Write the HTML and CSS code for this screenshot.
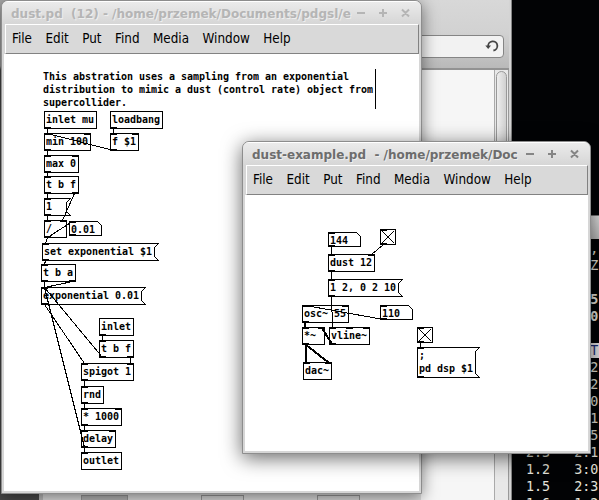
FILE: index.html
```html
<!DOCTYPE html>
<html lang="en">
<head>
<meta charset="utf-8">
<title>Pure Data patches</title>
<link rel="stylesheet" href="styles.css">
</head>
<body>
<div class="desktop">
  <div class="terminal">
    <pre class="term-text">        ,
        Z

<b>        5</b>
<b>        0</b>

<span class="term-head">        T </span>
        2
        2
        0
        1
        5
2.3   2:1
1.2   3:0
1.5   2:3
1.6   1:2</pre>
    <div class="term-bar"></div>
  </div>
  <div class="browser">
    <div class="toolbar">
      <div class="field">
        <svg width="14" height="14" viewBox="0 0 14 14"><path d="M3.2 7.5 A4.6 4.6 0 1 1 8.4 11.5" fill="none" stroke="#444" stroke-width="1.8"/><path d="M.3 6.6H6L3.2 10z" fill="#444"/></svg>
      </div>
    </div>
    <div class="content"><div class="thumbs"><i></i><i></i><i></i></div><div class="scrollbar"><div class="thumb"></div></div></div>
  </div>

  <section class="window main">
    <header class="titlebar"><span class="title">dust.pd&nbsp; (12) - /home/przemek/Documents/pdgsl/e</span>
      <svg class="controls" width="56" height="12" viewBox="0 0 56 12"><path d="M1 6h8M23 6h8M27 2v8M46 2.5l7 7M53 2.5l-7 7"/></svg>
    </header>
    <nav class="menu"><span>File</span><span>Edit</span><span>Put</span><span>Find</span><span>Media</span><span>Window</span><span>Help</span></nav>
    <svg class="patch" width="415" height="437" viewBox="4 54 415 437">
      <g class="text">
        <text x="43" y="80" textLength="306">This abstration uses a sampling from an exponential</text>
        <text x="43" y="93" textLength="330">distribution to mimic a dust (control rate) object from</text>
        <text x="43" y="106" textLength="84">supercollider.</text>
      </g>
      <path class="box" d="M375.5 69v40"/>
      <g class="box">
        <path d="M44.5 111.5h52v17h-52zM110.5 111.5h52v17h-52zM44.5 133.5h46v17h-46zM110.5 133.5h28v17h-28zM44.5 155.5h34v17h-34zM44.5 176.5h34v17h-34z"/>
        <path d="M44.5 198.5h26l-4 4v9l4 4h-26zM44.5 220.5h22v17h-22zM69.5 221.5h28l4 4v10h-32z"/>
        <path d="M42.5 243.5h116l-4 4v9l4 4h-116zM41.5 264.5h34v17h-34zM41.5 287.5h104l-4 4v9l4 4h-104z"/>
        <path d="M99.5 318.5h34v17h-34zM99.5 340.5h34v17h-34zM81.5 363.5h52v17h-52zM81.5 386.5h22v17h-22zM81.5 408.5h40v17h-40zM81.5 430.5h34v17h-34zM81.5 452.5h40v17h-40z"/>
      </g>
      <path class="port" d="M44 128h7M110 128h7M44 134h7M84 134h7M44 150h7M110 134h7M132 134h7M110 150h7M44 156h7M72 156h7M44 172h7M44 177h7M44 193h7M72 193h7M44 199h7M44 215h7M44 221h7M60 221h7M44 237h7M69 222h7M69 235h7M42 244h7M42 260h7M41 265h7M41 281h7M69 281h7M41 288h7M41 304h7M99 335h7M99 341h7M99 357h7M127 357h7M81 364h7M127 364h7M81 380h7M81 387h7M81 403h7M81 409h7M115 409h7M81 425h7M81 431h7M109 431h7M81 447h7M81 453h7"/>
      <path class="wire" d="M47.5 128v6M113.5 128v6M47.5 150v6M113.5 150.5L47.5 133.5M47.5 172v5M47.5 193v6M74.5 193.5L62.5 220.5M47.5 215v6M47.5 237.5L45.5 243.5M47.5 237.5L72.5 221.5M45.5 260.5L44.5 264.5M44.5 281v7M72.5 281.5L44.5 287.5M44.5 304.5L84.5 363.5M102.5 357.5L44.5 287.5M84.5 447.5L44.5 287.5M102.5 335v6M130.5 357v7M84.5 380v7M84.5 403v6M84.5 425v6M84.5 447v6"/>
      <g class="text">
        <text x="46" y="123" textLength="48">inlet mu</text>
        <text x="112" y="123" textLength="48">loadbang</text>
        <text x="46" y="145" textLength="42">min 100</text>
        <text x="112" y="145" textLength="24">f $1</text>
        <text x="46" y="167" textLength="30">max 0</text>
        <text x="46" y="188" textLength="30">t b f</text>
        <text x="46" y="210">1</text>
        <text x="46" y="232">/</text>
        <text x="71" y="233" textLength="24">0.01</text>
        <text x="44" y="255" textLength="108">set exponential $1</text>
        <text x="43" y="276" textLength="30">t b a</text>
        <text x="43" y="299" textLength="96">exponential 0.01</text>
        <text x="101" y="330" textLength="30">inlet</text>
        <text x="101" y="352" textLength="30">t b f</text>
        <text x="83" y="375" textLength="48">spigot 1</text>
        <text x="83" y="398" textLength="18">rnd</text>
        <text x="83" y="420" textLength="36">* 1000</text>
        <text x="83" y="442" textLength="30">delay</text>
        <text x="83" y="464" textLength="36">outlet</text>
      </g>
    </svg>
  </section>

  <section class="window example">
    <header class="titlebar"><span class="title">dust-example.pd&nbsp; - /home/przemek/Doc</span>
      <svg class="controls" width="56" height="12" viewBox="0 0 56 12"><path d="M1 6h8M23 6h8M27 2v8M46 2.5l7 7M53 2.5l-7 7"/></svg>
    </header>
    <nav class="menu"><span>File</span><span>Edit</span><span>Put</span><span>Find</span><span>Media</span><span>Window</span><span>Help</span></nav>
    <svg class="patch" width="343" height="256" viewBox="245 195 343 256">
      <g class="box">
        <path d="M328.5 232.5h28l4 4v10h-32zM380.5 229.5h15v15h-15zM328.5 254.5h46v17h-46zM328.5 279.5h74l-4 4v9l4 4h-74z"/>
        <path d="M302.5 305.5h46v17h-46zM380.5 305.5h28l4 4v10h-32zM302.5 327.5h22v17h-22zM329.5 327.5h40v17h-40zM303.5 362.5h28v17h-28z"/>
        <path d="M417.5 327.5h15v15h-15zM417.5 347.5h62l-4 4v22l4 4h-62z"/>
      </g>
      <path class="port" d="M328 233h7M328 246h7M380 230h7M380 244h7M328 255h7M368 255h7M328 271h7M328 280h7M328 296h7M302 306h7M342 306h7M302 322h7M380 306h7M380 319h7M302 328h7M318 328h7M302 344h7M329 328h7M346 328h7M363 328h7M329 344h7M303 363h7M325 363h7M417 328h7M417 342h7M417 348h7M417 377h7"/>
      <path class="wire" d="M382 231l12 12M394 231l-12 12M419 329l12 12M431 329l-12 12M331.5 246v9M383.5 244.5L371.5 254.5M331.5 271v9M331.5 296.5L332.5 327.5M383.5 319.5L305.5 305.5M420.5 342v6"/>
      <path class="wire signal" d="M305 322v6M332.5 344.5L321.5 327.5M306 344v19M305.5 344.5L328.5 362.5"/>
      <g class="text">
        <text x="330" y="244" textLength="18">144</text>
        <text x="330" y="266" textLength="42">dust 12</text>
        <text x="330" y="291" textLength="66">1 2, 0 2 10</text>
        <text x="304" y="317" textLength="42">osc~ 55</text>
        <text x="382" y="317" textLength="18">110</text>
        <text x="304" y="339" textLength="12">*~</text>
        <text x="331" y="339" textLength="36">vline~</text>
        <text x="305" y="374" textLength="24">dac~</text>
        <text x="419" y="359">;</text>
        <text x="419" y="372" textLength="54">pd dsp $1</text>
      </g>
    </svg>
  </section>
</div>
</body>
</html>
```
FILE: styles.css
```css
* { box-sizing: border-box; }
body { margin: 0; }

.desktop {
  position: relative;
  width: 599px;
  height: 500px;
  overflow: hidden;
  background: linear-gradient(#aaa 0, #999 66px, #444 70px, #4a4a4a 100%);
}

.terminal {
  position: absolute;
  left: 512px;
  top: 0;
  width: 87px;
  height: 500px;
  overflow: hidden;
  background: #020305;
}
.term-text {
  margin: 0;
  padding: 240px 0 0 14px;
  font: 13.33px/17px "DejaVu Sans Mono", monospace;
  color: #e4e2da;
}
.term-head { background: #e4e2e4; color: #1c2c74; }
.term-bar {
  position: absolute;
  left: 0;
  right: 0;
  top: 215px;
  height: 24px;
  border-top: 1px solid #777;
  background: linear-gradient(#e0e0e0, #bbb);
}

.browser {
  position: absolute;
  left: 39px;
  top: 0;
  width: 473px;
  height: 500px;
  display: flex;
  flex-direction: column;
  border-left: 4px solid #bbb;
  border-right: 1px solid #858585;
  padding-right: 2px;
  background: #d4d4d4;
}
.toolbar {
  height: 70px;
  padding: 35px 5px 0 0;
  border-bottom: 2px solid #929292;
  background: linear-gradient(#d8d8d8 0, #d2d2d2 32px, #b9b9b9 68px);
}
.field {
  height: 23px;
  display: flex;
  align-items: center;
  justify-content: flex-end;
  padding-right: 4px;
  border: 1px solid #858585;
  border-radius: 4px;
  background: #f2f2f2;
}
.field svg { margin-top: -2px; }
.content {
  flex: 1;
  display: flex;
  align-items: stretch;
  justify-content: space-between;
  background: #f6f6f6;
  border-right: 1px solid #999;
}
.thumbs {
  display: flex;
  align-items: flex-end;
  gap: 73px;
  padding-left: 38px;
  width: 378px;
  background: #ddd;
}
.thumbs i { width: 47px; height: 5px; border: 1px solid #999; border-bottom: 0; background: #b4b4b4; }
.thumbs i + i { width: 43px; background: #d8d8d8; }
.scrollbar { width: 14px; padding: 1px; border-left: 1px solid #aaa; background: #e8e8e8; }
.thumb { width: 11px; height: 370px; border: 1px solid #999; border-radius: 6px; background: linear-gradient(90deg, #eee, #d0d0d0); }

.window {
  position: absolute;
  display: flex;
  flex-direction: column;
  overflow: hidden;
  border: 1px solid #8d8d8d;
  border-radius: 7px 7px 0 0;
  background: #d6d6d6;
}
.main { left: 1px; top: 0; width: 421px; height: 494px; padding: 0 2px; box-shadow: 0 3px 16px rgba(0, 0, 0, .5); }
.example { left: 242px; top: 141px; width: 349px; height: 313px; padding: 0 2px; box-shadow: 0 4px 20px rgba(0, 0, 0, .6); }

.titlebar {
  height: 23px;
  flex: none;
  display: flex;
  align-items: center;
  margin: 0 -2px;
  padding: 1px 8px 0 9px;
  border-top: 1px solid #fff;
  background: linear-gradient(#ebebeb, #d6d6d6);
}
.title {
  width: 339px;
  flex: none;
  white-space: nowrap;
  font: bold 12px/18px "DejaVu Sans", sans-serif;
  color: #b5b5b5;
  text-shadow: 1px 1px #eee;
}
.controls { flex: none; margin: -1px 0 0 6px; fill: none; stroke: #b5b5b5; stroke-width: 2; }
.example .title { width: 267px; color: #6d6d6d; }
.example .controls { stroke: #858585; }

.menu {
  height: 30px;
  flex: none;
  display: flex;
  align-items: center;
  gap: 13.5px;
  margin-left: 1px;
  padding-left: 6px;
  border: 1px solid #828282;
  border-top-color: #fff;
  border-left-color: #fff;
  background: #d9d9d9;
  font: 13.33px/16px "DejaVu Sans Condensed", "DejaVu Sans", sans-serif;
  font-stretch: condensed;
  color: #000;
}

.patch { display: block; flex: none; background: #fff; }
.box { fill: none; stroke: #000; stroke-width: 1; shape-rendering: crispEdges; }
.port { fill: none; stroke: #000; stroke-width: 2; shape-rendering: crispEdges; }
.wire { fill: none; stroke: #000; stroke-width: 1; shape-rendering: crispEdges; }
.signal { stroke-width: 2; }
.text { font: bold 10px "DejaVu Sans Mono", monospace; fill: #000; }
```
